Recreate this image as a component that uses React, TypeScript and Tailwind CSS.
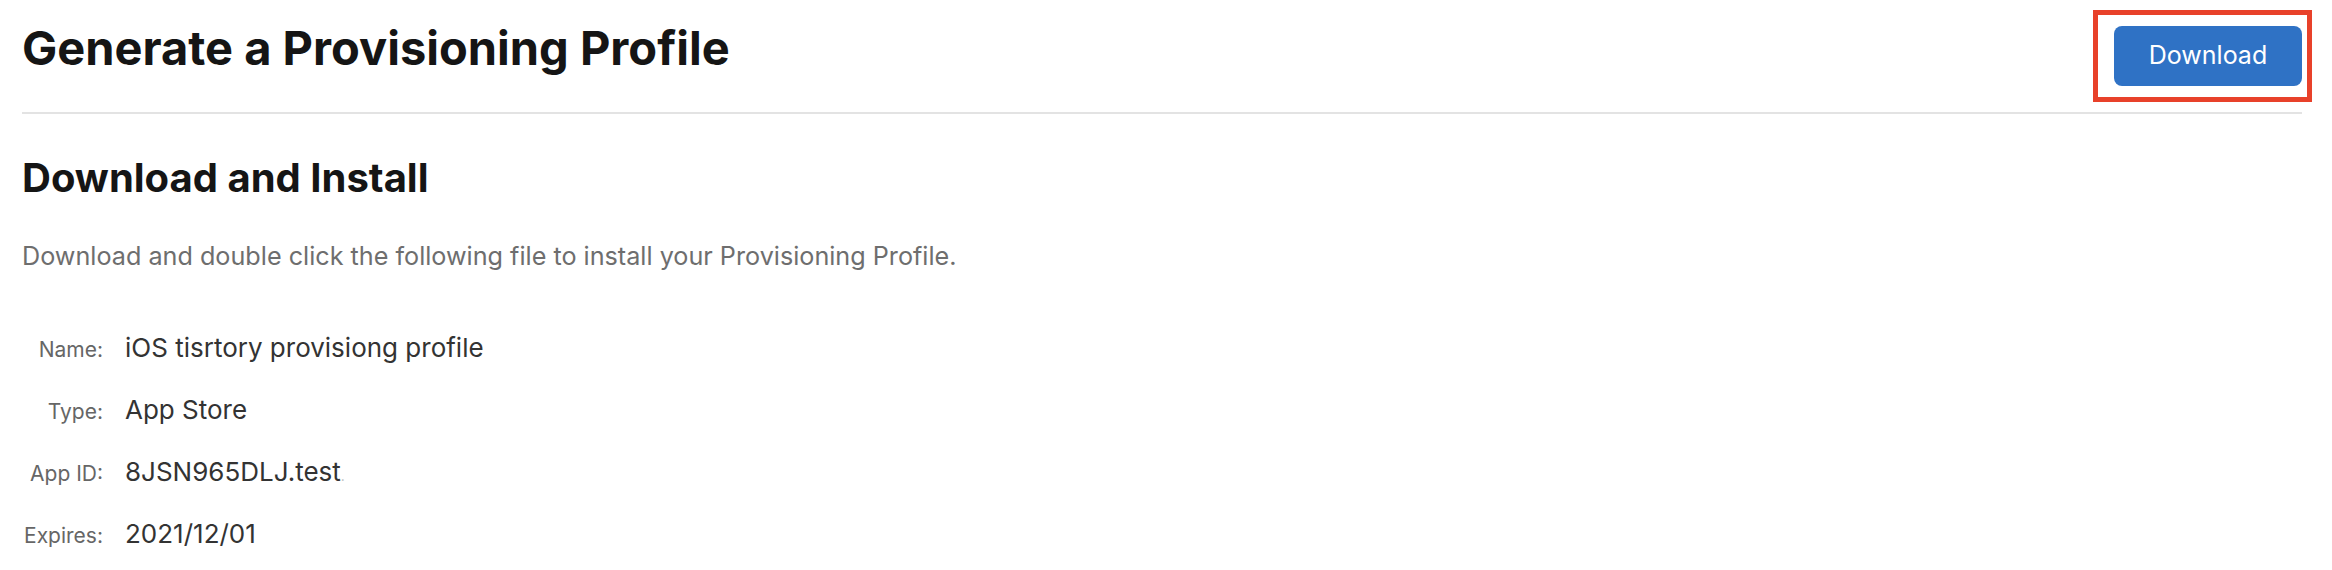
import React from 'react';

const rows = [
  { label: 'Name:', value: 'iOS tisrtory provisiong profile' },
  { label: 'Type:', value: 'App Store' },
  { label: 'App ID:', value: '8JSN965DLJ.test', trail: true },
  { label: 'Expires:', value: '2021/12/01' },
];

const App: React.FC = () => {
  return (
    <div className="min-h-[570px] bg-white pl-[22px] pr-[30px] font-['Inter','Liberation_Sans',sans-serif] antialiased">
      <header className="flex h-[114px] items-start justify-between border-b-2 border-[#e3e3e3]">
        <h1 className="mt-[24px] text-[47px] font-bold leading-[47px] text-[#151515]">
          Generate a Provisioning Profile
        </h1>
        <div className="relative mt-[26px]">
          <button className="h-[60px] w-[188px] rounded-[8px] bg-[#2f72c5] text-[25px] text-white">
            Download
          </button>
          <div className="pointer-events-none absolute -top-[16px] -bottom-[16px] -left-[21px] -right-[10px] border-[5px] border-[#e8412a]" />
        </div>
      </header>

      <h2 className="mt-[44px] text-[40px] font-bold leading-[40px] text-[#151515]">
        Download and Install
      </h2>
      <p className="mt-[46px] text-[25.2px] leading-[25px] text-[#6e6e6e]">
        Download and double click the following file to install your Provisioning Profile.
      </p>

      <div className="mt-[48px]">
        {rows.map(row => (
          <div key={row.label} className="flex h-[62px] items-baseline">
            <span className="w-[81px] text-right text-[21px] leading-[62px] text-[#666666]">{row.label}</span>
            <span className="ml-[22px] text-[26px] leading-[62px] text-[#333333]">
              {row.value}
              {row.trail && <span className="text-[14px] text-[#bbbbbb]">.</span>}
            </span>
          </div>
        ))}
      </div>
    </div>
  );
};

export default App;
